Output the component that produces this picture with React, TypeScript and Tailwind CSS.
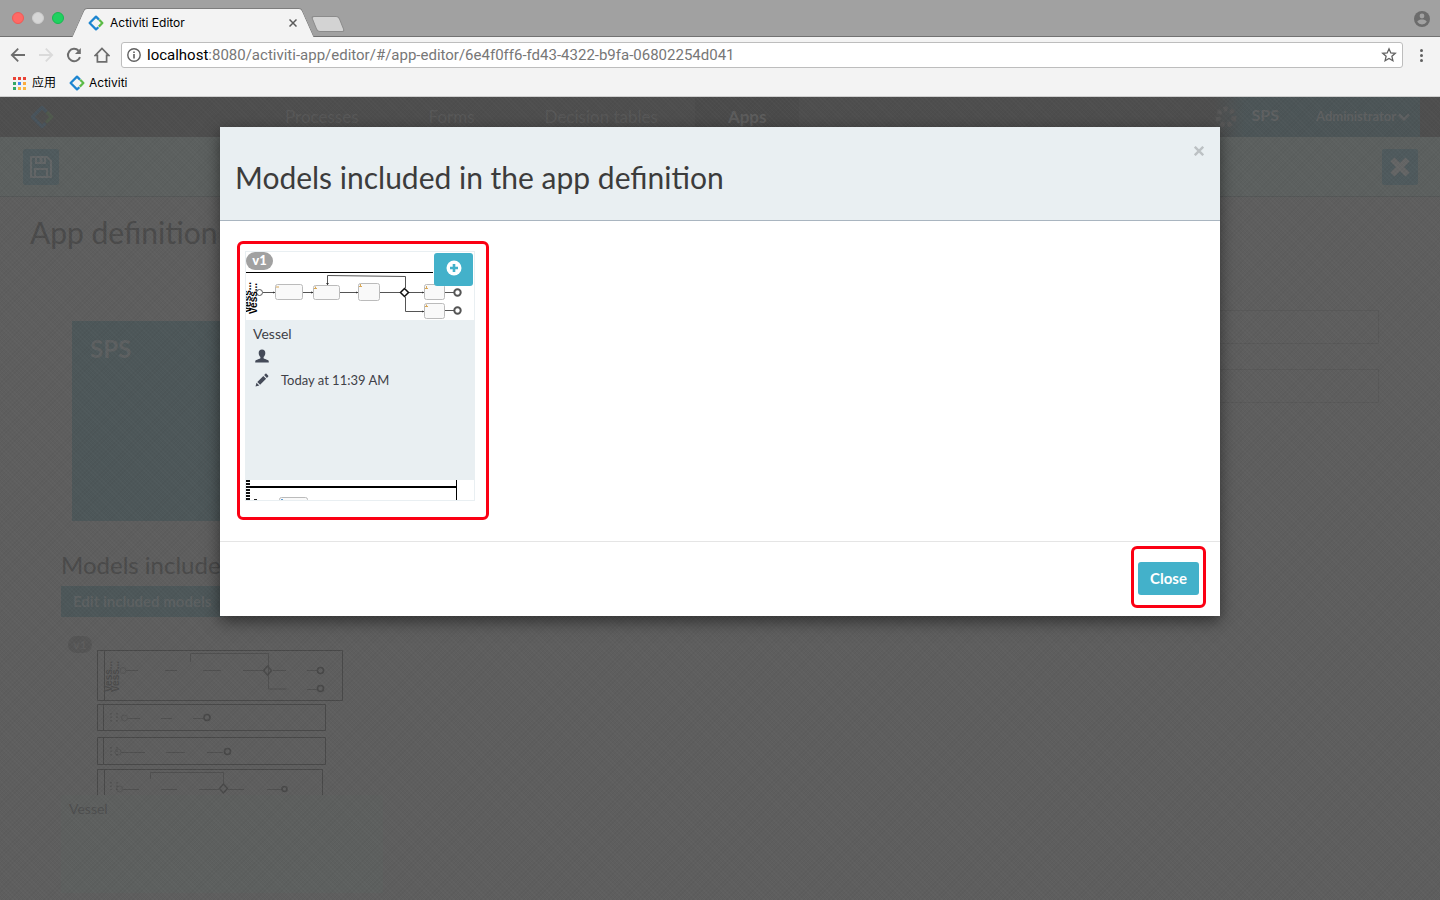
import React from "react";

function ActivitiLogo({ className }: { className: string }) {
  return (
    <svg viewBox="0 0 16 16" className={className} fill="none" strokeWidth="2.2" aria-hidden="true">
      <path d="M10.4 12.2 8 14.4 1.6 8 8 1.6l3 3" stroke="#1c85d0" strokeLinejoin="round" />
      <path d="M11.2 4.8 14.4 8l-3.600 3.600" stroke="#5cbb46" strokeLinejoin="round" />
    </svg>
  );
}

function TabStrip() {
  return (
    <div className="relative flex h-[37px] items-end border-b border-[#717171] bg-[#a1a1a1]">
      <div className="flex w-[78px] items-center gap-2 self-center pl-3">
        <button aria-label="Close window" className="size-3 rounded-full border border-[#ee5a55] bg-[#ff6965]" />
        <button aria-label="Minimize window" className="size-3 rounded-full border border-[#cbcbcb] bg-[#d6d6d6]" />
        <button aria-label="Zoom window" className="size-3 rounded-full border border-[#17b94f] bg-[#1fd160]" />
      </div>
      <div className="relative -mb-px h-[29px] w-[230px]">
        <span className="absolute inset-y-0 left-0 w-1/2 origin-center -skew-x-[24deg] rounded-tl-[3px] border-t border-l border-[#7d7d7d] bg-[#f3f3f3]" />
        <span className="absolute inset-y-0 right-0 w-1/2 origin-center skew-x-[24deg] rounded-tr-[3px] border-t border-r border-[#7d7d7d] bg-[#f3f3f3]" />
        <span className="absolute inset-y-0 left-1/2 w-10 -translate-x-1/2 border-t border-[#7d7d7d] bg-[#f3f3f3]" />
        <div className="relative flex h-full items-center pr-[7px] pl-[10px] text-xs text-black">
          <ActivitiLogo className="size-4" />
          <span className="ml-[6px] flex-1">Activiti Editor</span>
          <button aria-label="Close tab" className="p-1">
            <svg viewBox="0 0 8 8" className="size-2" stroke="#5a5a5a" strokeWidth="1.5">
              <path d="M.5.5l7 7M7.5.5l-7 7" />
            </svg>
          </button>
        </div>
      </div>
      <button
        aria-label="New tab"
        className="mb-1 ml-[6px] h-4 w-7 skew-x-[22deg] rounded-[3px] border border-[#8b8b8b] bg-[#d3d3d3]"
      />
      <svg viewBox="0 0 16 16" className="mr-[10px] mb-[9px] ml-auto size-4" aria-label="Profile">
        <circle cx="8" cy="8" r="8" fill="#6c6c6c" />
        <circle cx="8" cy="5" r="2.4" fill="#a1a1a1" />
        <path d="M3.2 10.8C4 9.2 6 8.6 8 8.6s4 .6 4.8 2.2A5.7 5.7 0 0 1 8 13.4a5.7 5.7 0 0 1-4.8-2.6z" fill="#a1a1a1" />
      </svg>
    </div>
  );
}

function AddressBar() {
  return (
    <div className="flex h-9 items-center bg-[#f3f3f3] pl-[10px]">
      <div className="flex w-[111px] items-center gap-3 text-[#6d6d6d]">
        <button aria-label="Back">
          <svg viewBox="0 0 16 16" className="size-4" fill="none" stroke="currentColor" strokeWidth="1.8">
            <path d="M15 8H2M8.2 1.6 1.8 8l6.4 6.4" />
          </svg>
        </button>
        <button aria-label="Forward" className="text-[#dadada]">
          <svg viewBox="0 0 16 16" className="size-4" fill="none" stroke="currentColor" strokeWidth="1.8">
            <path d="M1 8h13M7.8 1.6 14.2 8l-6.4 6.4" />
          </svg>
        </button>
        <button aria-label="Reload">
          <svg viewBox="0 0 16 16" className="size-4" fill="none" stroke="currentColor" strokeWidth="2">
            <path d="M14 10.2A6.2 6.2 0 1 1 12.6 3.7" />
            <path d="M14.8 1v6H9z" fill="currentColor" stroke="none" />
          </svg>
        </button>
        <button aria-label="Home">
          <svg viewBox="0 0 16 16" className="size-4" fill="none" stroke="currentColor" strokeWidth="1.7">
            <path d="M8 1.4 1.2 8.4h2.2v6.4h9.2V8.4h2.2z" />
          </svg>
        </button>
      </div>
      <div className="flex h-[26px] flex-1 items-center gap-[6px] rounded-[3px] border border-[#bdbdbd] bg-white px-[5px] font-['Roboto',sans-serif] text-[15px] text-[#777]">
        <svg viewBox="0 0 14 14" className="size-[14px]" fill="none" stroke="#606060" strokeWidth="1.4" aria-hidden="true">
          <circle cx="7" cy="7" r="6.2" />
          <path d="M7 6v4.4M7 3.4v1.5" strokeWidth="1.6" />
        </svg>
        <span className="flex-1 whitespace-nowrap">
          <span className="text-black">localhost</span>
          :8080/activiti-app/editor/#/app-editor/6e4f0ff6-fd43-4322-b9fa-06802254d041
        </span>
        <button aria-label="Bookmark this page">
          <svg viewBox="0 0 16 16" className="size-4" fill="none" stroke="#606060" strokeWidth="1.3">
            <path d="M8 1.8l1.8 4.1 4.5.4-3.4 3 1 4.4L8 11.4l-3.9 2.3 1-4.4-3.4-3 4.5-.4z" />
          </svg>
        </button>
      </div>
      <button aria-label="Menu" className="flex w-[37px] flex-col items-center gap-[2px]">
        <span className="size-[3px] rounded-full bg-[#606060]" />
        <span className="size-[3px] rounded-full bg-[#606060]" />
        <span className="size-[3px] rounded-full bg-[#606060]" />
      </button>
    </div>
  );
}

const appDots = ["#ea4335", "#ea4335", "#ea4335", "#34a866", "#4285f4", "#fbab3f", "#34a866", "#fbb643", "#fbb643"];

function BookmarksBar() {
  return (
    <div className="flex h-6 items-start gap-[13px] border-b border-[#cfcfcf] bg-[#f3f3f3] pl-[13px] text-xs text-black">
      <a href="#apps" className="flex h-5 items-center gap-[6px]">
        <svg viewBox="0 0 13 13" className="size-[13px]" aria-hidden="true">
          {appDots.map((fill, i) => (
            <rect key={i} x={(i % 3) * 5} y={Math.floor(i / 3) * 5} width="3" height="3" fill={fill} />
          ))}
        </svg>
        应用
      </a>
      <a href="#activiti" className="flex h-5 items-center gap-1">
        <ActivitiLogo className="size-4" />
        Activiti
      </a>
    </div>
  );
}

function NavBar() {
  return (
    <header className="flex h-10 items-stretch bg-[#4e4e4e] pr-5 text-[17px] text-[#585858]">
      <div className="flex w-[252px] items-center pl-[30px]">
        <ActivitiLogo className="size-6 opacity-10" />
      </div>
      <nav className="flex flex-1 gap-1">
        <a href="#processes" className="flex items-center px-[33px]">Processes</a>
        <a href="#forms" className="flex items-center px-[33px]">Forms</a>
        <a href="#tables" className="flex items-center px-[33px]">Decision tables</a>
        <a href="#home" className="flex items-center bg-[#4b4b4b] px-[33px] font-bold text-[#5d5d5d]">Apps</a>
      </nav>
      <div className="flex items-center bg-gradient-to-r from-[#4e4e4e] via-[#4c5557] via-15% to-[#4c5557] pr-[10px] font-bold text-[#5e6061]">
        <svg viewBox="0 0 24 24" className="size-6" fill="none" stroke="#575757" strokeWidth="5" strokeDasharray="4 3" aria-hidden="true">
          <circle cx="12" cy="12" r="8" />
        </svg>
        <a href="#sps" className="pb-1 pl-[14px] text-base">SPS</a>
        <button className="flex items-center gap-[2px] pl-[37px] text-[13px] font-bold">
          Administrator
          <svg viewBox="0 0 12 12" className="size-3" fill="none" stroke="currentColor" strokeWidth="2.6" aria-hidden="true">
            <path d="M1 3.5l5 5 5-5" />
          </svg>
        </button>
      </div>
    </header>
  );
}

function Toolbar() {
  return (
    <div className="flex h-[60px] items-center justify-between border-b border-[#545757] bg-[#5c605f] pr-[22px] pl-[23px]">
      <button aria-label="Save" className="flex size-9 items-center justify-center rounded-[3px] bg-[#4f5a5d]">
        <svg viewBox="0 0 24 24" className="size-6" fill="none" stroke="#626566" strokeWidth="2.2">
          <path d="M2 2h16l4 4v16H2z" strokeLinejoin="round" />
          <path d="M6 22v-8h12v8M7 2v6h9V2" />
          <path d="M12 3v4" strokeWidth="3" />
        </svg>
      </button>
      <button aria-label="Discard" className="flex size-9 items-center justify-center rounded-[3px] bg-[#4f5a5d]">
        <svg viewBox="0 0 20 20" className="size-5" stroke="#646565" strokeWidth="6">
          <path d="M2.5 2.5l15 15M17.5 2.5l-15 15" />
        </svg>
      </button>
    </div>
  );
}

function ModelThumbnail() {
  return (
    <svg viewBox="97 650 246 145" className="ml-9 h-[145px] w-[246px]" fill="none" stroke="#484848" aria-hidden="true">
      <path d="M97.500 650.500h245v50h-245zM104.500 650.500v50M97.500 704.500h228v26h-228zM103.500 704.500v26M97.500 737.500h228v27h-228zM103.500 737.500v27M97.500 795v-25.500h225V795M104.500 769.500V795" />
      <path d="M190.500 662v-8.500h78v35.500h18M126 670.500h12M165 670.500h12M203 670.500h18M243 670.500h22M273 670.500h13M307 670.500h10M307 689.500h10" stroke="#4f4f4f" />
      <path d="M128 718.500h12M161 718.500h11M193 718.500h10M121 752.500h24M166 752.500h19M207 752.500h16M123 789.500h16M161 789.500h16M199 789.500h20M228 789.500h16M267 789.500h15M150.500 779v-6.500h73v12" stroke="#4f4f4f" />
      <path d="M267.500 666l4 4.500-4 4.500-4-4.500zM223.500 784l4 4.500-4 4.500-4-4.500z" strokeWidth="1.400" />
      <g stroke="#545454">
        <circle cx="123" cy="670.500" r="3" />
        <circle cx="124.500" cy="718" r="3" />
        <circle cx="118" cy="752" r="3" />
        <circle cx="119.500" cy="789" r="3" />
      </g>
      <g strokeWidth="1.600">
        <circle cx="320.500" cy="670.500" r="3" />
        <circle cx="320.500" cy="688.500" r="3" />
        <circle cx="207" cy="717.500" r="3" />
        <circle cx="227.500" cy="751.500" r="3" />
        <circle cx="284.500" cy="789" r="2.500" />
      </g>
      <path d="M111 713v9M117 713v9M111 747v9M117 747v9M111 782v8M117 782v8" strokeDasharray="1.500 2" />
      <g fill="#4b4b4b" stroke="none" fontSize="10" fontWeight="700" fontFamily="Liberation Sans, sans-serif">
        <text transform="translate(112 692) rotate(-90)">Vess...</text>
        <text transform="translate(119 692) rotate(-90)">Vess...</text>
      </g>
    </svg>
  );
}

function AppDefinitionPage() {
  return (
    <div className="font-['Lato',sans-serif]">
      <NavBar />
      <Toolbar />
      <main className="px-[30px] pt-[17px] text-[#4a4a4a]">
        <h1 className="text-[30px] leading-9">App definition details</h1>
        <div className="mt-[60px] flex items-start pr-[31px]">
          <div className="mt-[11px] ml-[42px] h-[200px] w-[300px] bg-[#4d5759] px-[18px] pt-3 text-2xl leading-8 font-bold text-[#5d6061]">
            SPS
          </div>
          <form className="ml-20 flex flex-1 flex-col gap-[25px]">
            <input aria-label="App name" className="h-[34px] border border-[#585858] bg-transparent px-3" />
            <input aria-label="App key" className="h-[34px] border border-[#585858] bg-transparent px-3" />
          </form>
        </div>
        <section className="mt-[29px] ml-[31px]">
          <h2 className="text-2xl leading-[30px]">Models included in the app definition</h2>
          <button className="mt-[6px] flex h-[31px] items-center bg-[#4d5759] px-3 text-[15px] font-bold text-[#5c6061]">
            Edit included models
          </button>
          <div className="relative mt-[19px] w-[322px] pt-[14px]">
            <span className="absolute top-0 left-[7px] flex h-[17px] w-6 items-center justify-center rounded-full bg-[#555] text-xs font-bold text-[#5d5d5d]">
              v1
            </span>
            <ModelThumbnail />
            <div className="h-[98px] bg-gradient-to-b from-[#5d5f5e] to-[#5d605f] px-2 pt-1 text-sm text-[#4d4e4e]">Vessel</div>
          </div>
        </section>
      </main>
    </div>
  );
}

function ProcessDiagram() {
  return (
    <svg viewBox="246 252 228 248" className="absolute inset-0 h-full w-full" fill="none" stroke="#555" aria-hidden="true">
      <path d="M246 272.500h187" stroke="#000" />
      <path d="M263 292.500h12M303 292.500h12M340 292.500h18M380 292.500h20M409 292.500h15M445 292.500h9M405.500 297v14.500h19M445 310.500h9M327.500 285v-9.500l78 1V288" />
      <path d="M273 291.500l2 1-2 1zM311 291.500l3 1-3 1zM356 291.500l2 1-2 1zM422 291.500l2 1-2 1zM422 310.500l2 1-2 1zM326 283l1.500 2 1.500-2z" fill="#333" stroke="none" />
      <g fill="#f9f9f9" stroke="#bbb">
        <rect x="275.500" y="284.500" width="27" height="15" rx="2" />
        <rect x="313.500" y="285.500" width="26" height="14" rx="2" />
        <rect x="358.500" y="283.500" width="21" height="17" rx="2" />
        <rect x="424.500" y="284.500" width="20" height="15" rx="2" />
        <rect x="424.500" y="303.500" width="20" height="15" rx="2" />
      </g>
      <path d="M276 287h3M314 288.500h3M315.500 286.500v2M359 286.500h3M360.500 284v2M425 288.500h3M426.500 286v2M425 306.500h3M426.500 304.500v2" stroke="#d9a857" />
      <circle cx="259.500" cy="292.500" r="3" fill="#fff" />
      <path d="M404.500 288.500l4 4-4 4-4-4z" fill="#fff" stroke="#111" strokeWidth="1.500" />
      <circle cx="457.500" cy="292.500" r="3.200" strokeWidth="2" />
      <circle cx="457.500" cy="310.500" r="3.200" strokeWidth="2" />
      <g fill="#000" stroke="none" fontSize="10" fontWeight="700" fontFamily="Liberation Sans, sans-serif">
        <text transform="translate(251 313) rotate(-90)">Vess...</text>
        <text transform="translate(257 314) rotate(-90)">Vess...</text>
      </g>
      <path d="M246 487h211" stroke="#000" strokeWidth="2" />
      <path d="M456.500 480v20" stroke="#000" />
      <path d="M248 480v20" stroke="#111" strokeWidth="4" strokeDasharray="2 1" />
      <path d="M254 499.500h3" stroke="#222" />
      <rect x="279.500" y="497.500" width="28" height="12" rx="2" fill="#f9f9f9" stroke="#bbb" />
      <path d="M281 499.500h2" stroke="#5c9bd1" />
    </svg>
  );
}

function ModelCard() {
  return (
    <article className="relative flex h-[250px] w-[230px] flex-col border border-[#e9eff2] bg-white">
      <ProcessDiagram />
      <span className="absolute top-0 left-0 flex h-[18px] w-[27px] items-center justify-center rounded-full bg-[#a1a1a1] text-[13px] font-black text-white">
        v1
      </span>
      <button
        aria-label="Add model"
        className="absolute top-px right-px flex h-[33px] w-[39px] items-center justify-center rounded-[3px] bg-[#43b1ca] pb-[3px]"
      >
        <svg viewBox="0 0 16 16" className="size-4">
          <circle cx="8" cy="8" r="7.500" fill="#fff" />
          <path d="M8 4v8M4 8h8" stroke="#43b1ca" strokeWidth="2.600" />
        </svg>
      </button>
      <div className="relative -mx-px mt-[68px] h-40 bg-[#e9eff2] px-2 pt-[5px] text-sm leading-[18px] text-[#3f4148]">
        <p>Vessel</p>
        <p className="mt-1 flex h-[18px] items-center pl-[2px]">
          <svg viewBox="0 0 14 14" className="size-[14px]" fill="#454b59" aria-label="Created by">
            <path d="M7 .5c2.200 0 3.300 1.500 3.300 3.500 0 1.700-.7 3.300-1.700 4v1.200c.2.700 4.400 1.500 4.900 2.400.3.500.3 1.400.3 1.900H.2c0-.5 0-1.400.3-1.900.5-.9 4.700-1.700 4.900-2.400V8c-1-.7-1.700-2.300-1.700-4C3.700 2 4.800.500 7 .500z" />
          </svg>
        </p>
        <p className="mt-[6px] flex items-center gap-3 pl-[2px] text-[13px]">
          <svg viewBox="0 0 14 14" className="size-[14px]" fill="#454b59" aria-label="Last edited">
            <path d="M.5 13.500l1-3.800 2.800 2.800zM2.300 8.900l6-6 2.800 2.800-6 6zM9.100 2.100l1.200-1.200c.4-.4.900-.4 1.300 0l1.500 1.500c.4.400.4.900 0 1.300l-1.200 1.200z" />
          </svg>
          Today at 11:39 AM
        </p>
      </div>
    </article>
  );
}

function ModelsDialog() {
  return (
    <div
      role="dialog"
      aria-labelledby="dialog-title"
      className="absolute inset-x-0 top-[30px] mx-auto w-[1000px] max-w-full bg-white font-['Lato',sans-serif] shadow-[0_5px_15px_rgba(0,0,0,0.5)]"
    >
      <header className="flex h-[94px] items-start justify-between border-b border-[#a9b5c0] bg-[#e9eff2] px-[15px]">
        <h2 id="dialog-title" className="pt-[30px] text-[30px] leading-10 text-[#3c3c3c]">
          Models included in the app definition
        </h2>
        <button aria-label="Dismiss" className="mt-[19px]">
          <svg viewBox="0 0 10 10" className="mr-px size-[10px]" stroke="#bcc1c4" strokeWidth="2.400">
            <path d="M.8.800l8.400 8.400M9.200.800.800 9.200" />
          </svg>
        </button>
      </header>
      <div className="h-80 px-[17px] pt-5">
        <div className="w-[252px] rounded-[6px] border-[3px] border-[#fb0013] px-[5px] pt-[7px] pb-4">
          <ModelCard />
        </div>
      </div>
      <footer className="flex justify-end border-t border-[#e5e5e5] px-[14px] pt-1 pb-2">
        <div className="rounded-[6px] border-[3px] border-[#fb0013] px-1 pt-[13px] pb-[10px]">
          <button className="h-[33px] w-[61px] rounded-[3px] bg-[#43b1ca] text-[15px] font-bold text-white">Close</button>
        </div>
      </footer>
    </div>
  );
}

export default function App() {
  return (
    <div className="flex h-screen flex-col overflow-hidden font-['Inter','Noto_Sans_CJK_SC',sans-serif]">
      <TabStrip />
      <AddressBar />
      <BookmarksBar />
      <div className="relative flex-1 overflow-hidden bg-[#5e5e5e]">
        <AppDefinitionPage />
        <div className="absolute inset-0 bg-[repeating-linear-gradient(45deg,rgba(255,255,255,0.02)_0px_1px,transparent_1px_3px),repeating-linear-gradient(-45deg,rgba(0,0,0,0.03)_0px_1px,transparent_1px_3px)]" />
        <ModelsDialog />
      </div>
    </div>
  );
}
